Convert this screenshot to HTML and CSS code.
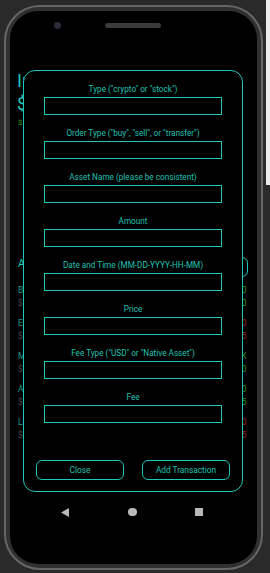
FILE: index.html
```html
<!DOCTYPE html>
<html>
	<head>
		<title>Add Transaction</title>

		<link rel="stylesheet" href="styles.css">
	</head>

	<body>
		<div class="phone">
			<div class="screen">
				<div class="deviceTop">
					<div class="camera"></div>
					<div class="speaker"></div>
				</div>

				<div class="app">
					<div class="title">Index</div>
					<div class="title">$48,215</div>
					<div class="gain">$1,204.55</div>

					<div class="assetsHeader">
						<div class="assetsTitle">Assets</div>
						<div class="addAsset">Add</div>
					</div>

					<div class="assetRow">
						<div class="assetInfo">
							<div class="assetName">Bitcoin</div>
							<div class="assetSub">$31,500</div>
						</div>
						<div class="assetValues">
							<div class="up">$32,750.00</div>
							<div class="up">+$1,250.00</div>
						</div>
					</div>
					<div class="assetRow">
						<div class="assetInfo">
							<div class="assetName">Ethereum</div>
							<div class="assetSub">$9,800</div>
						</div>
						<div class="assetValues">
							<div class="down">$9,410.00</div>
							<div class="down">-$389.95</div>
						</div>
					</div>
					<div class="assetRow">
						<div class="assetInfo">
							<div class="assetName">MSFT</div>
							<div class="assetSub">$2,950</div>
						</div>
						<div class="assetValues">
							<div class="up">$3.1K</div>
							<div class="up">+$150.00</div>
						</div>
					</div>
					<div class="assetRow">
						<div class="assetInfo">
							<div class="assetName">AAPL</div>
							<div class="assetSub">$1,720</div>
						</div>
						<div class="assetValues">
							<div class="up">$1,810.00</div>
							<div class="up">+$89.95</div>
						</div>
					</div>
					<div class="assetRow">
						<div class="assetInfo">
							<div class="assetName">Litecoin</div>
							<div class="assetSub">$1,100</div>
						</div>
						<div class="assetValues">
							<div class="down">$1,000.00</div>
							<div class="down">-$99.95</div>
						</div>
					</div>
				</div>

				<div class="navBar">
					<svg class="navBack" viewBox="0 0 8 9"><polygon points="8,0 8,9 0,4.5"/></svg>
					<div class="navHome"></div>
					<div class="navRecent"></div>
				</div>

				<div class="modal">
					<div class="field">
						<label class="fieldLabel">Type ("crypto" or "stock")</label>
						<input class="fieldInput" type="text">
					</div>
					<div class="field">
						<label class="fieldLabel">Order Type ("buy", "sell", or "transfer")</label>
						<input class="fieldInput" type="text">
					</div>
					<div class="field">
						<label class="fieldLabel">Asset Name (please be consistent)</label>
						<input class="fieldInput" type="text">
					</div>
					<div class="field">
						<label class="fieldLabel">Amount</label>
						<input class="fieldInput" type="text">
					</div>
					<div class="field">
						<label class="fieldLabel">Date and Time (MM-DD-YYYY-HH-MM)</label>
						<input class="fieldInput" type="text">
					</div>
					<div class="field">
						<label class="fieldLabel">Price</label>
						<input class="fieldInput" type="text">
					</div>
					<div class="field">
						<label class="fieldLabel">Fee Type ("USD" or "Native Asset")</label>
						<input class="fieldInput" type="text">
					</div>
					<div class="field">
						<label class="fieldLabel">Fee</label>
						<input class="fieldInput" type="text">
					</div>

					<div class="modalButtons">
						<button class="modalButton">Close</button>
						<button class="modalButton">Add Transaction</button>
					</div>
				</div>
			</div>
		</div>

		<div class="sideStrip"></div>
	</body>
</html>
```

FILE: styles.css
```css
body
{
	margin: 0;
	width: 270px;
	height: 573px;
	overflow: hidden;
	display: flex;
	align-items: flex-start;
	background-color: #2a2a2a;
	font-family: Roboto, "Noto Sans", sans-serif;
}

.phone
{
	box-sizing: border-box;
	width: 259px;
	height: 565px;
	margin: 5px 0 0 4px;
	padding: 4px;
	border: 2px solid #666666;
	border-radius: 36px;
	background-color: #303030;
}

.sideStrip
{
	width: 4px;
	height: 185px;
	margin-left: 3px;
	background-color: #ececec;
}

.screen
{
	position: relative;
	height: 100%;
	display: flex;
	flex-direction: column;
	border-radius: 28px;
	background-color: #000000;
	overflow: hidden;
}

.deviceTop
{
	height: 28px;
	flex-shrink: 0;
	display: flex;
	align-items: center;
}

.camera
{
	width: 7px;
	height: 7px;
	margin-left: 44px;
	border-radius: 50%;
	background-color: #2c2c3a;
}

.speaker
{
	width: 56px;
	height: 5px;
	margin-left: 44px;
	border-radius: 3px;
	background-color: #3a3a3a;
}

/* app behind the dialog */

.app
{
	padding: 30px 9px 0 8px;
}

.title
{
	margin-left: -1px;
	font-size: 18px;
	line-height: 23px;
	color: #1ec7b7;
	white-space: nowrap;
}

.gain
{
	margin-top: 2px;
	font-size: 8px;
	line-height: 12px;
	color: #2f9a2a;
}

.assetsHeader
{
	display: flex;
	justify-content: space-between;
	align-items: flex-start;
	height: 20px;
	margin-top: 128px;
}

.assetsTitle
{
	font-size: 10.5px;
	line-height: 14px;
	color: #1ec7b7;
}

.addAsset
{
	box-sizing: border-box;
	width: 30px;
	height: 20px;
	border: 1.5px solid #1ec7b7;
	border-radius: 6px;
	font-size: 8px;
	line-height: 17px;
	text-align: center;
	color: #1ec7b7;
}

.assetRow
{
	display: flex;
	justify-content: space-between;
	height: 27px;
	margin-top: 6px;
	margin-bottom: 5px;
	font-size: 8.5px;
}

.assetName
{
	line-height: 14px;
	color: #1a9c92;
}

.assetSub
{
	line-height: 13px;
	color: #4a4a4a;
}

.assetValues
{
	padding-right: 1.5px;
	text-align: right;
}

.assetValues div:first-child
{
	line-height: 14px;
}

.assetValues div:last-child
{
	line-height: 13px;
}

.up
{
	color: #2a9a2a;
}

.down
{
	color: #9c2424;
}

.navBar
{
	display: flex;
	align-items: center;
	height: 28px;
	margin-top: auto;
	margin-bottom: 38px;
	padding-left: 51px;
}

.navBack
{
	width: 8px;
	height: 9px;
	fill: #b9b9b9;
}

.navHome
{
	width: 8.5px;
	height: 8.5px;
	margin-left: 59px;
	border-radius: 50%;
	background-color: #b9b9b9;
}

.navRecent
{
	width: 8.5px;
	height: 8.5px;
	margin-left: 58px;
	background-color: #b9b9b9;
}

/* add transaction dialog */

.modal
{
	position: absolute;
	left: 13px;
	top: 59px;
	box-sizing: border-box;
	width: 220px;
	height: 422px;
	display: flex;
	flex-direction: column;
	padding: 12.5px 20px 11.5px 20px;
	border: 1.5px solid #1ec7b7;
	border-radius: 12px;
	background-color: #000000;
}

.field
{
	margin-bottom: 13px;
}

.fieldLabel
{
	display: block;
	margin-bottom: 3px;
	font-size: 8.2px;
	line-height: 10px;
	text-align: center;
	color: #22c2b2;
	white-space: nowrap;
}

.fieldInput
{
	display: block;
	box-sizing: border-box;
	width: 100%;
	height: 18px;
	margin: 0;
	padding: 0 4px;
	border: 1.5px solid #1ec7b7;
	border-radius: 0;
	outline: none;
	background-color: transparent;
	color: #1ec7b7;
}

.modalButtons
{
	display: flex;
	justify-content: space-between;
	margin: auto -8px 0 -8px;
}

.modalButton
{
	box-sizing: border-box;
	width: 88px;
	height: 20px;
	padding: 0;
	border: 1.5px solid #1ec7b7;
	border-radius: 6px;
	background-color: transparent;
	font-family: Roboto, "Noto Sans", sans-serif;
	font-size: 8.3px;
	color: #22c2b2;
}
```
